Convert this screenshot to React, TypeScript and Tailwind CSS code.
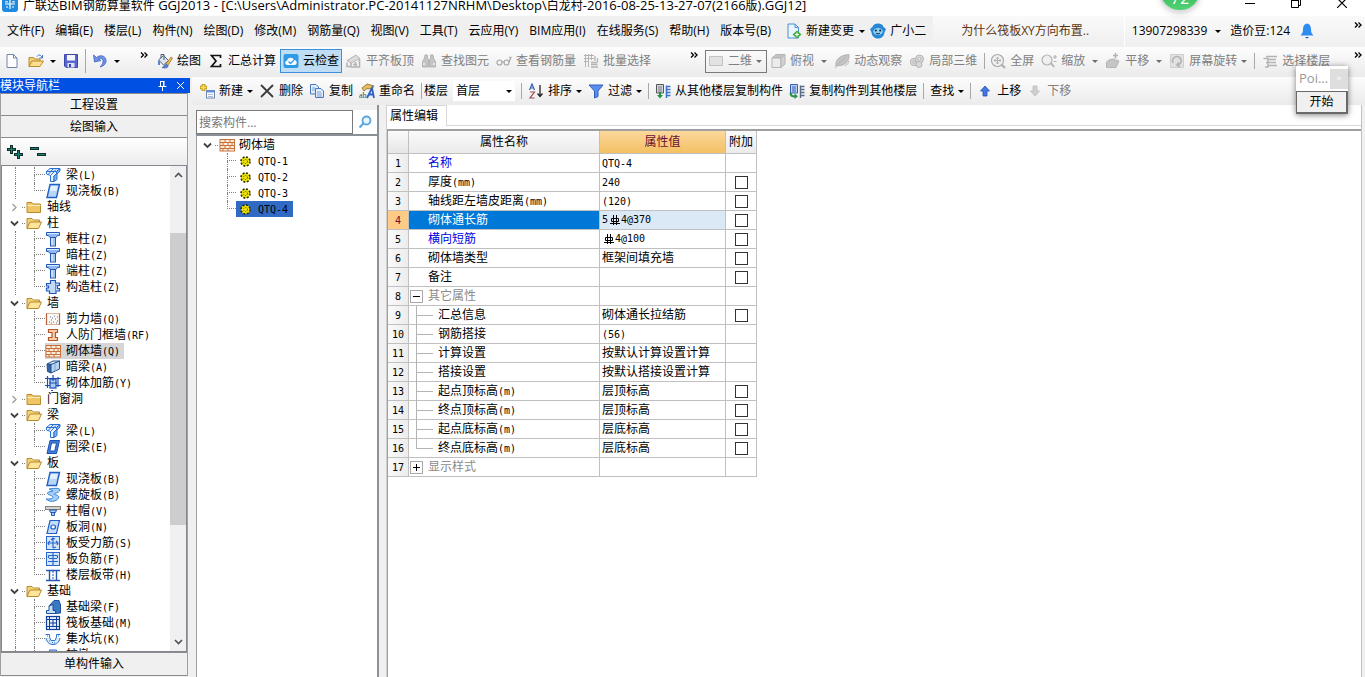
import type { ReactNode } from 'react';

const LINE = '#2a6fd0';
const FILL = '#a9cdf5';

function Svg({ children, size = 16, className = '' }: { children: ReactNode; size?: number; className?: string }) {
  return (
    <svg width={size} height={size} viewBox="0 0 16 16" className={`shrink-0 ${className}`} aria-hidden="true">
      {children}
    </svg>
  );
}

/* ---------- component type icons ---------- */

const slabPath = 'M5 1.5H14.5L11.5 14.5H2Z';

const kinds: Record<string, ReactNode> = {
  beam: (
    <g fill={FILL} stroke={LINE} strokeWidth="1">
      <path d="M1.5 4.5 5 1.5H15L11.5 4.5Z" fill="#d8eafc" />
      <path d="M1.5 4.5H11.5V7L9 9V14.5H5.5V8.5L1.5 7Z" fill="#eaf4fe" />
      <path d="M11.5 4.5 15 1.5V4L12 7V12.5L9 14.5V9L11.5 7Z" fill="#7fb3ee" />
      <path d="M3.5 7 8 2M6 8 11 2.500" />
    </g>
  ),
  slab: (
    <g>
      <path d={slabPath} fill="#b9d6f8" stroke="#1f5fc8" strokeWidth="1.400" />
      <path d="M6 3H12.500L11.500 8H4.800Z" fill="#e3effd" />
    </g>
  ),
  column: (
    <g stroke="#2456b8" strokeWidth="1">
      <path d="M1.500 1.500H14.500V4.500H12.500L11 6.500H5L3.500 4.500H1.500Z" fill="#8db8f0" />
      <rect x="5.500" y="6.500" width="5" height="8.500" fill="#c9e0fb" />
      <path d="M9 7V14.500" stroke="#7ba8e8" />
      <path d="M2 2.500H14" stroke="#d9e9fc" />
    </g>
  ),
  tie: (
    <g>
      <path
        d="M5.500 1.500H10.500V4H14.500V6.500H12.500V9.500H14.500V12H11V14.500H4.500V12H1.500V9H3.500V7H1.500V4.500H5.500Z"
        fill="#c3dbf8"
        stroke="#2456b8"
        strokeWidth="1.200"
      />
      <path d="M10.500 4V12M12.500 6.500H10.500" stroke="#5f8fda" />
    </g>
  ),
  shear: (
    <g>
      <rect x="1.500" y="2.500" width="13" height="11" fill="#fbfaf5" stroke="#e0b497" />
      <path d="M1.500 14V2.500M14.500 2.500V14" stroke="#b9603a" strokeWidth="1.200" />
      <path d="M4 11h1M6 9h1M8 11h1M10 8h1M12 10h1M5 6h1M9 5h1M12 6h1M6 12h1M11 12h1M7 7h1" stroke="#5a6d86" />
    </g>
  ),
  frame: <path d="M3.500 2.500H12.500V5.500H10.500V10.500H12.500V13.500H3.500V10.500H7V5.500H3.500Z" fill="#f8cfa8" stroke="#b4552a" strokeWidth="1.200" />,
  brick: (
    <g stroke="#c8703c" fill="#fdeedb">
      <rect x="1" y="2.500" width="14.500" height="11.500" />
      <path d="M1 5.500H15M1 8.500H15M1 11.500H15M6 2.500V5.500M11 2.500V5.500M4 5.500V8.500M9 5.500V8.500M13 5.500V8.500M6 8.500V11.500M11 8.500V11.500M4 11.500V14M9 11.500V14" />
    </g>
  ),
  hidden: (
    <g stroke="#24518f">
      <path d="M2 5 8 2H14.500L8 5.500Z" fill="#e4effb" />
      <path d="M2 5 6 5.500V14L2.500 12.500Z" fill="#37659f" />
      <path d="M6 5.500 14.500 2V10L6 14Z" fill="#b8d3f2" />
      <path d="M10 4V12" stroke="#7fa6d6" />
    </g>
  ),
  rebar: (
    <g fill="none" stroke="#1c4fae" strokeWidth="1.200">
      <path d="M0 3.500H16M0 10.500H16M2.500 1V13M13 2V12" />
      <rect x="5" y="4" width="6" height="9" fill={FILL} />
      <path d="M8 0V6M4 8H12M6 15.500H8" />
    </g>
  ),
  ring: (
    <g stroke="#1c4fae">
      <path d={slabPath} fill="#3f80dd" />
      <path d="M6.500 4H11.500L9.800 12H4.800Z" fill="#fff" />
    </g>
  ),
  spiral: (
    <path
      d="M4 2C10 1 15 1 15 3C14 6 9 6 9 7C10 8 15 8 13.500 11C11 15 5 15.500 1 12C5 12 8 12 8 10C7 8 2 8 2.500 6C3 4 7 5 8 4Z"
      fill={FILL}
      stroke="#2e86d8"
    />
  ),
  cap: (
    <g>
      <rect x="0.500" y="3.500" width="15" height="3" fill="#d5d2cb" stroke="#85817a" />
      <path d="M4.500 7H11.500L10.500 9.500H5.500ZM6.500 9.500H9.500V12.500H6.500Z" fill={FILL} stroke="#2456b8" />
    </g>
  ),
  hole: (
    <g stroke="#1f5fc8" strokeWidth="1.200">
      <path d={slabPath} fill="#c4dcf9" />
      <ellipse cx="8.200" cy="8" rx="2.300" ry="2" fill="#fff" />
    </g>
  ),
  force: (
    <g fill="none" stroke="#2a67cc">
      <rect x="1.500" y="1.500" width="13" height="13" fill="#d3e6fb" />
      <path d="M3 8H13M8 3V13M5 6 3 8 4 10M11 6 13 8 12 10M6 5 8 3 10 4M8 13 11 12" strokeWidth="1.200" />
    </g>
  ),
  neg: (
    <g fill="none" stroke="#2a67cc">
      <rect x="1.500" y="1.500" width="13" height="13" fill="#d3e6fb" />
      <path d="M3.500 4.500H12.500M3 10.500H13M8 2V14M3.500 4.500V7M12.500 4.500V7M4 7.500H12" strokeWidth="1.200" />
    </g>
  ),
  band: (
    <g stroke="#2457b6">
      <path d="M1 3.500H15M1 13.500H15" strokeWidth="1.500" />
      <path d="M4.500 3V13M11.500 3V13" strokeWidth="1.400" />
      <path d="M8 4V13" strokeDasharray="2 1" />
    </g>
  ),
  fbeam: (
    <g stroke="#1c4f9e">
      <path d="M4 7 9 1.500H14L15.500 6V14L10 14.500Z" fill="#3b78c4" />
      <path d="M1.500 14.500V11.500H4V7L8 5.500V11.500H10.500V14.500Z" fill="#c9e0fa" />
    </g>
  ),
  raft: (
    <g fill="none" stroke="#123f9a">
      <rect x="1.500" y="1.500" width="13" height="13" fill="#e3effc" strokeWidth="1.200" />
      <path d="M4.500 1V15M11.500 1V15M1 4.500H15M1 11.500H15M8 4V12M4 8H12" />
    </g>
  ),
  pit: (
    <g fill="none" stroke="#2a72cf">
      <path d="M1 7C2 12 5 13.500 8 13.500C11 13.500 14 12 15 7" fill="#d7e8fb" />
      <path d="M0.500 3.500H4.500V6L6 9.500H10L11.500 6V3.500H15.500" fill="#fff" />
      <path d="M2 5h1M13 5h1M7 11.500h1M9 12h1M4 10h1" />
    </g>
  ),
  pile: <path d="M4.500 3H11.500V8L8 14L4.500 8Z" fill={FILL} stroke={LINE} />,
};

function Folder({ open }: { open: boolean }) {
  return (
    <Svg>
      {open ? (
        <g stroke="#b98a2c">
          <path d="M1 13.500V3.500H6L7.500 5H13.500V7" fill="#f3d27c" />
          <path d="M1 13.500 4 7H15.500L12.500 13.500Z" fill="#fce49b" />
        </g>
      ) : (
        <g stroke="#b98a2c">
          <path d="M1 13.500V3.500H6L7.500 5H14.500V13.500Z" fill="#f0c665" />
          <path d="M1.500 6.500H14.500" stroke="#fdeebb" />
        </g>
      )}
    </Svg>
  );
}

function Chevron({ open }: { open: boolean }) {
  return (
    <svg width="11" height="11" viewBox="0 0 11 11" className="shrink-0" fill="none" aria-hidden="true">
      {open ? (
        <path d="M2 3.500 5.500 7 9 3.500" stroke="#404040" strokeWidth="1.800" />
      ) : (
        <path d="M3.500 2 7 5.500 3.500 9" stroke="#a0a0a0" strokeWidth="1.400" />
      )}
    </svg>
  );
}

/* ---------- toolbar icons ---------- */

const grey = '#b4b4b4';
const tools: Record<string, ReactNode> = {
  doc: <path d="M3 1.500H9.500L13 5V14.500H3ZM9.500 1.500V5H13" fill="#fff" stroke="#7383a8" />,
  open: (
    <g>
      <path d="M1 13.500V4.500H5.500L7 6H12V8" fill="#f2cf74" stroke="#b98a2c" />
      <path d="M1 13.500 4 8H15.500L12 13.500Z" fill="#fbdf8e" stroke="#b98a2c" />
      <path d="M9 3.500C11 1 13 2 14 4.500M14.500 2V5H11.500" fill="none" stroke="#3c6eb8" />
    </g>
  ),
  save: (
    <g>
      <path d="M1.500 1.500H14.500V14.500H3L1.500 13Z" fill="#5a66d0" stroke="#3c46a4" />
      <rect x="4" y="2" width="8" height="5.500" fill="#f3f5ff" />
      <rect x="4.500" y="10" width="7" height="4.500" fill="#dfe2f2" />
      <rect x="6" y="11" width="2" height="3" fill="#3c46a4" />
    </g>
  ),
  undo: <path d="M1.500 2 2.500 9 9 7.500 6.500 6C9 4.500 11.500 6 11 9C10.800 11 9.500 12.500 8 14C12 13 14.500 10.500 14 7C13.300 2.500 8 1.500 4.500 4.500Z" fill="#6d93e8" stroke="#3f62bd" strokeWidth=".8" />,
  bucket: (
    <g>
      <path d="M1.500 7 6.500 2.500 11.500 7.500 6.500 12Z" fill="#dbe4ef" stroke="#4d6076" />
      <path d="M4 5V1.500H7V7" fill="none" stroke="#4d6076" />
      <path d="M15.500 5 14 4 9 11 11 12.500Z" fill="#f2bf55" stroke="#8f6a24" strokeWidth=".7" />
      <path d="M9 11.500C7 12 7 14 5 14.500C8 15.500 11.500 15 11 12.500Z" fill="#5a7fd6" stroke="#3558ac" strokeWidth=".7" />
      <path d="M2 8V12" stroke="#4a79d0" strokeWidth="1.800" />
    </g>
  ),
  sigma: <path d="M12.500 5V2.500H3.500L8 8 3.500 13.500H12.500V11" fill="none" stroke="#111" strokeWidth="1.700" />,
  cloud: (
    <g>
      <rect x=".5" y="1" width="15" height="14" rx="2" fill="#2f9be4" />
      <path d="M4.500 12C1.500 12 1.500 8 4 7.800C4.500 4 10 3.500 11 7C14.500 7 14.500 12 11.500 12Z" fill="#fff" />
      <path d="M5.500 8.500 7.500 10.500 11 7" fill="none" stroke="#2f9be4" strokeWidth="1.300" />
    </g>
  ),
  house: (
    <g fill="#dcdcdc" stroke={grey}>
      <path d="M1 7.500 10 2 14 5.500 5 10Z" />
      <path d="M5 10V14H13.500V6M1 9.500V13.500H4M7 11.500H11M9.500 9V14" fill="none" strokeWidth="1.600" />
    </g>
  ),
  binoc: (
    <g fill="#c4c4c4" stroke={grey}>
      <path d="M4 2H6.500V5L7.500 7V14H1.500V9L3.500 5ZM9.500 2H12L12.500 5 14.500 9V14H8.500V7L9.500 5Z" />
      <path d="M3 10V12M13 10V12" stroke="#f4f4f4" strokeWidth="1.500" />
    </g>
  ),
  glasses: (
    <g fill="none" stroke="#a6a6a6" strokeWidth="1.200">
      <circle cx="3.500" cy="9.500" r="2.500" />
      <circle cx="10.500" cy="9.500" r="2.500" />
      <path d="M6 9H8M13 9 15 4.500 13 4" />
    </g>
  ),
  batch: (
    <g fill="none" stroke={grey}>
      <path d="M1 2.500H11M1 5.500H11M1 8.500H6M2.500 1V14M5.500 1V14M8.500 1V7" />
      <path d="M8 9.500H14.500M8 11.500H14.500M8 14H15M12 3V8M14.500 5V9" strokeWidth="1.300" />
    </g>
  ),
  plane: <path d="M1.500 3.500H14.500V12.500H1.500Z" fill="#e2e2e2" stroke="#c2c2c2" />,
  cube: (
    <g stroke={grey}>
      <path d="M2 5 6 1.500H15L11 5Z" fill="#c4c4c4" />
      <path d="M2 5H11V14.500H2Z" fill="#ececec" />
      <path d="M11 5 15 1.500V11L11 14.500Z" fill="#d2d2d2" />
    </g>
  ),
  leaf: (
    <g stroke={grey}>
      <path d="M2 13C1 8 5 2 15 1.500C15.500 6 13 12 6 12.500Z" fill="#c4c4c4" />
      <path d="M1 15 4 11 12 4M11 13C13 12 14.500 10 15 8" fill="none" />
    </g>
  ),
  orbit: (
    <g fill="#d9d9d9" stroke={grey}>
      <circle cx="5" cy="9" r="3.700" />
      <circle cx="10.500" cy="6" r="4" />
      <circle cx="10" cy="11.500" r="3" />
      <circle cx="10.500" cy="6" r="1.500" fill="#f4f4f4" />
      <circle cx="5" cy="9" r="1.300" fill="#f4f4f4" />
    </g>
  ),
  full: (
    <g fill="#f1f1f1" stroke="#ababab" strokeWidth="1.200">
      <path d="M11.500 11.500 15 15" strokeWidth="2" />
      <circle cx="7.500" cy="7.500" r="6" />
      <path d="M4 7.500H11M7.500 4V11M5 6V9M10 6V9M6 5H9M6 10H9" strokeWidth=".9" />
    </g>
  ),
  zoom: (
    <g fill="#efefef" stroke={grey} strokeWidth="1.200">
      <path d="M10 10 13 14" strokeWidth="2" />
      <circle cx="6" cy="7" r="5" />
      <path d="M14 2V6M12 4H16M12.500 8.500H15.500" fill="none" />
    </g>
  ),
  pan: (
    <g fill="#c6c6c6" stroke={grey}>
      <path d="M1.500 9V14.500H11L14 8 12 7 10 8V6.500L7.500 6 4 7Z" />
      <path d="M10.500 0V5.500M8 2.500H13" strokeWidth="1.600" />
    </g>
  ),
  rotate: (
    <g fill="none" stroke={grey}>
      <path d="M1.500 1.500H14.500V14.500H1.500Z" fill="#e2e2e2" stroke="#cfcfcf" />
      <path d="M4 10C2 5 7 2.500 10 4C14 7 12 11.500 8 12L9.500 9.500M8 12 11 14" strokeWidth="1.600" />
    </g>
  ),
  floors: (
    <path d="M4 3.500H15M6 6.500H14M4 9.500H14M6 12.500H15M1.500 5.500H6V14H3" fill="none" stroke={grey} strokeWidth="1.500" />
  ),
  add: (
    <g>
      <path d="M4.500 1V8M1 4.500H8" stroke="#a88512" strokeWidth="3.600" />
      <path d="M4.500 1.500V7.500M1.500 4.500H7.500" stroke="#fbdc55" strokeWidth="2" />
      <rect x="7.500" y="7.500" width="8" height="7.500" fill="#fff" stroke="#6f86ad" />
      <path d="M7.500 8.500H15.500" stroke="#5f8fd8" strokeWidth="2" />
      <path d="M9 11.500H14M9 13.500H14" stroke="#a9bcd8" />
    </g>
  ),
  del: <path d="M2 2 14 14M14 2 2 14" stroke="#3c3c3c" strokeWidth="1.800" />,
  copy: (
    <g fill="#e3edfb" stroke="#4878bf">
      <path d="M1.500 1.500H7L9.500 4V11H1.500Z" />
      <path d="M6.500 5.500H12L14.500 8V14.500H6.500Z" />
      <path d="M3 5H6M3 7H6M8 9H12M8 11H13M8 13H13" stroke="#7ea0d4" />
    </g>
  ),
  rename: (
    <g>
      <path d="M3 5 8 1 15 3 13 6 8 5.500 5 8Z" fill="#e2bd62" stroke="#8a6b22" strokeWidth=".8" />
      <text x="0" y="14.500" fontSize="8" fontFamily="Liberation Serif" fill="#444">ab</text>
      <path d="M8 15 13 5 15 15M10 11.500H14.500" fill="none" stroke="#2d62c4" strokeWidth="1.800" />
    </g>
  ),
  sort: (
    <g>
      <path d="M1.500 7 4 1 6.500 7M2.500 5H5.500" fill="none" stroke="#3461b4" strokeWidth="1.200" />
      <path d="M2 9H6.500L2 15H6.500" fill="none" stroke="#a04a55" strokeWidth="1.200" />
      <path d="M12 2V13M9.500 10.500 12 13.500 14.500 10.500" fill="none" stroke="#222" strokeWidth="1.300" />
    </g>
  ),
  funnel: <path d="M1 2H15L10 8V13.500L6.500 15V8Z" fill="#5b8def" stroke="#2f5fbe" />,
  fromFloor: (
    <g>
      <path d="M1.500 1.500H8.500V10H1.500Z" fill="#d5d9e0" stroke="#555" />
      <path d="M3 4H7M3 6H7M3 8H7" stroke="#777" />
      <path d="M5 9V13" stroke="#269246" strokeWidth="2" />
      <path d="M2 12H8L5 15.500Z" fill="#269246" />
      <path d="M11.500 2.500V15M11.500 3.500H15.500M11.500 6.500H15.500M11.500 9.500H15.500M11.500 12.500H15.500" stroke="#3f74cc" strokeWidth="1.600" />
    </g>
  ),
  toFloor: (
    <g>
      <path d="M1.500 1.500H8.500V10H1.500Z" fill="#bcd3f4" stroke="#3461b4" />
      <path d="M3 4H7M3 6H7M3 8H7" stroke="#3461b4" />
      <path d="M1.500 10C1.500 13.500 4 13.500 6 13.500" fill="none" stroke="#269246" strokeWidth="2" />
      <path d="M5.500 10.500 9 13.200 5.500 16Z" fill="#269246" />
      <path d="M11.500 2.500V15M11.500 3.500H15.500M11.500 6.500H15.500M11.500 9.500H15.500M11.500 12.500H15.500" stroke="#5a6b88" strokeWidth="1.400" />
    </g>
  ),
  up: <path d="M8 3 12.500 8H10V13H6V8H3.500Z" fill="#3f78e6" stroke="#2350a8" strokeWidth=".8" />,
  down: <path d="M8 13 12.500 8H10V3H6V8H3.500Z" fill="#cfcfcf" stroke="#bdbdbd" strokeWidth=".8" />,
  change: (
    <g>
      <path d="M2 1H9L12.500 4.500V15H2Z" fill="#eaf4fd" stroke="#4c8fd0" />
      <path d="M9 1V4.500H12.500" fill="none" stroke="#4c8fd0" />
      <path d="M11 7.500 15.500 11.500 11 15.500 6.500 11.500Z" fill="#3fae3a" />
      <path d="M11 9.500V13.500M9 11.500H13" stroke="#fff" strokeWidth="1.100" />
    </g>
  ),
  robot: (
    <g>
      <path d="M8 .5C11 .5 13 2 13.500 4L16 6L14.500 9.500C14 13.500 11 15.500 8 15.500C5 15.500 2 13.500 1.500 9.500L0 6L2.500 4C3 2 5 .5 8 .5Z" fill="#2587d6" />
      <ellipse cx="8" cy="8.500" rx="4.800" ry="3.500" fill="#8fd2f6" />
      <circle cx="5.800" cy="7.500" r="1" fill="#123" />
      <circle cx="10.200" cy="7.500" r="1" fill="#123" />
      <path d="M6 10C7 11.200 9 11.200 10 10" stroke="#123" fill="none" />
    </g>
  ),
};

function Caret({ muted }: { muted?: boolean }) {
  return (
    <svg width="6" height="3" viewBox="0 0 6 3" className="shrink-0" aria-hidden="true">
      <path d="M0 0H6L3 3Z" fill={muted ? '#6e6e6e' : '#000'} />
    </svg>
  );
}

function More() {
  return (
    <button type="button" aria-label="更多" className="flex w-2">
      <svg width="8" height="6" viewBox="0 0 8 6" fill="none" stroke="#000" strokeWidth="1.300" aria-hidden="true">
        <path d="M1 .5 3.500 3 1 5.500M4.500 .5 7 3 4.500 5.500" />
      </svg>
    </button>
  );
}

function Sep() {
  return <span className="h-4 w-px shrink-0 bg-[#a8a8a8]" />;
}

function Tool({
  icon,
  label,
  caret,
  disabled,
}: {
  icon?: string;
  label: string;
  caret?: 'near' | 'wide';
  disabled?: boolean;
}) {
  return (
    <button
      type="button"
      disabled={disabled}
      className="flex shrink-0 items-center gap-1 whitespace-nowrap disabled:text-[#808080]"
    >
      {icon && <Svg>{tools[icon]}</Svg>}
      <span className={caret === 'wide' ? 'pr-[3px]' : ''}>{label}</span>
      {caret && <Caret muted={disabled} />}
    </button>
  );
}

/* Pairs 12px ideographs with half-width Latin, as in a bitmap Song face. */
function Song({ text }: { text: string }) {
  return (
    <>
      {text.split(/([\x21-\x7e]+)/).map((part, i) =>
        i % 2 ? (
          <span key={i} className="font-['DejaVu_Sans_Mono',monospace] text-[10px]">
            {part}
          </span>
        ) : (
          part
        ),
      )}
    </>
  );
}

/* ---------- data ---------- */

const menus = [
  '文件(F)', '编辑(E)', '楼层(L)', '构件(N)', '绘图(D)', '修改(M)', '钢筋量(Q)', '视图(V)', '工具(T)',
  '云应用(Y)', 'BIM应用(I)', '在线服务(S)', '帮助(H)', '版本号(B)',
];

type Group = { name?: string; open: boolean; items: [string, string][] };

const groups: Group[] = [
  { open: true, items: [['beam', '梁(L)'], ['slab', '现浇板(B)']] },
  { name: '轴线', open: false, items: [] },
  { name: '柱', open: true, items: [['column', '框柱(Z)'], ['column', '暗柱(Z)'], ['column', '端柱(Z)'], ['tie', '构造柱(Z)']] },
  {
    name: '墙',
    open: true,
    items: [['shear', '剪力墙(Q)'], ['frame', '人防门框墙(RF)'], ['brick', '砌体墙(Q)'], ['hidden', '暗梁(A)'], ['rebar', '砌体加筋(Y)']],
  },
  { name: '门窗洞', open: false, items: [] },
  { name: '梁', open: true, items: [['beam', '梁(L)'], ['ring', '圈梁(E)']] },
  {
    name: '板',
    open: true,
    items: [
      ['slab', '现浇板(B)'], ['spiral', '螺旋板(B)'], ['cap', '柱帽(V)'], ['hole', '板洞(N)'],
      ['force', '板受力筋(S)'], ['neg', '板负筋(F)'], ['band', '楼层板带(H)'],
    ],
  },
  { name: '基础', open: true, items: [['fbeam', '基础梁(F)'], ['raft', '筏板基础(M)'], ['pit', '集水坑(K)'], ['pile', '柱墩(D)']] },
];

type Row = { name: string; value?: ReactNode; check?: boolean; kind?: 'link' | 'open' | 'closed' | 'child' | 'last' };

function RebarMark() {
  return (
    <svg width="10" height="10" viewBox="0 0 10 10" className="mx-px shrink-0" fill="none" stroke="#000" aria-label="三级钢">
      <path d="M3.500 0V10M6.500 0V10M0 8.500H10M1.500 3.500H8.500V6.500H1.500Z" />
    </svg>
  );
}

const rows: Row[] = [
  { name: '名称', value: 'QTQ-4', kind: 'link' },
  { name: '厚度(mm)', value: '240', check: true },
  { name: '轴线距左墙皮距离(mm)', value: '(120)', check: true },
  { name: '砌体通长筋', value: <><Song text="5" /><span className="w-px" /><RebarMark /><Song text="4@370" /></>, check: true },
  { name: '横向短筋', value: <><span className="w-px" /><RebarMark /><Song text="4@100" /></>, check: true, kind: 'link' },
  { name: '砌体墙类型', value: '框架间填充墙', check: true },
  { name: '备注', check: true },
  { name: '其它属性', kind: 'open' },
  { name: '汇总信息', value: '砌体通长拉结筋', check: true, kind: 'child' },
  { name: '钢筋搭接', value: '(56)', kind: 'child' },
  { name: '计算设置', value: '按默认计算设置计算', kind: 'child' },
  { name: '搭接设置', value: '按默认搭接设置计算', kind: 'child' },
  { name: '起点顶标高(m)', value: '层顶标高', check: true, kind: 'child' },
  { name: '终点顶标高(m)', value: '层顶标高', check: true, kind: 'child' },
  { name: '起点底标高(m)', value: '层底标高', check: true, kind: 'child' },
  { name: '终点底标高(m)', value: '层底标高', check: true, kind: 'last' },
  { name: '显示样式', kind: 'closed' },
];

/* ---------- panels ---------- */

function TitleBar() {
  return (
    <header className="flex h-4 shrink-0 items-start bg-white pl-[2px]">
      <Svg className="-mt-1">
        <rect width="16" height="16" rx="3" fill="#1f8be0" />
        <path d="M8 3V13M3 8H13M4 5V6H6M12 5V6H10M4 11H6M12 11H10" stroke="#fff" strokeWidth="1.200" fill="none" />
      </Svg>
      <h1 className="ml-[5px] flex-1 whitespace-pre text-[13px] leading-[10px]">
        <span className="text-xs leading-[10px]">广联达</span>BIM<span className="text-xs leading-[10px]">钢筋算量软件</span>
        {' GGJ2013 - [C:\\Users\\Administrator.PC-20141127NRHM\\Desktop\\'}
        <span className="text-xs leading-[10px]">白龙村</span>-2016-08-25-13-27-07(2166
        <span className="text-xs leading-[10px]">版</span>).GGJ12]
      </h1>
      <div className="flex gap-9 pr-[18px]">
        <button type="button" aria-label="最小化">
          <svg width="10" height="8" viewBox="0 0 10 8"><path d="M0 3.500H10" stroke="#000" /></svg>
        </button>
        <button type="button" aria-label="还原">
          <svg width="10" height="8" viewBox="0 0 10 8" fill="none" stroke="#000"><path d="M.5 0V7.500H7.500V0M7.500 5.500H9.500V0M.5 .5H7.500" /></svg>
        </button>
        <button type="button" aria-label="关闭">
          <svg width="10" height="8" viewBox="0 0 10 8" fill="none" stroke="#000" strokeWidth="1.200"><path d="M0 -2 10 8M10 -2 0 8" /></svg>
        </button>
      </div>
    </header>
  );
}

function MenuBar() {
  return (
    <nav className="flex h-[31px] shrink-0 items-center bg-[#f0f0f0] pb-px">
      <div className="flex gap-[11px] pl-[7px]">
        {menus.map((m) => (
          <button key={m} type="button" className="whitespace-nowrap">{m}</button>
        ))}
      </div>
      <div className="ml-[15px] flex items-center gap-[5px]">
        <button type="button" className="flex items-center gap-1 whitespace-nowrap">
          <Svg>{tools.change}</Svg><span className="pr-px">新建变更</span><Caret />
        </button>
        <button type="button" className="flex items-center gap-1 whitespace-nowrap">
          <Svg>{tools.robot}</Svg>广小二
        </button>
      </div>
      <div className="ml-[7px] flex h-full flex-1 items-center bg-linear-to-b from-[#fafafa] to-[#efefef]">
        <a href="#tips" className="ml-[28px] whitespace-nowrap text-[#5c3410]">为什么筏板XY方向布置..</a>
        <span className="ml-auto flex h-full items-center gap-[9px] border-l border-white pl-[7px]">
          <button type="button" className="flex items-center gap-2">13907298339 <Caret /></button>
          <span className="whitespace-nowrap">造价豆:124</span>
          <button type="button" aria-label="通知">
            <Svg>
              <path d="M8 .5C5 1 4 3.500 4 6.500C4 9.500 3 11 1.500 12.500H14.500C13 11 12 9.500 12 6.500C12 3.500 11 1 8 .5Z" fill="#2c8cf0" />
              <path d="M6 14H10L8 15.500Z" fill="#14508f" />
            </Svg>
          </button>
        </span>
        <span className="ml-[39px] mr-[3px] mb-3"><More /></span>
      </div>
    </nav>
  );
}

function MainToolbar() {
  return (
    <div className="flex h-[30px] shrink-0 items-center bg-linear-to-b from-[#fdfdfd] to-[#ebebeb] pb-[2px]">
      <div className="flex items-center pl-1">
        <button type="button" aria-label="新建"><Svg>{tools.doc}</Svg></button>
        <button type="button" aria-label="打开" className="ml-2 flex items-center gap-[6px]"><Svg>{tools.open}</Svg><Caret /></button>
        <button type="button" aria-label="保存" className="ml-[7px]"><Svg>{tools.save}</Svg></button>
        <span className="mx-[6px] h-6 w-px bg-[#a8a8a8]" />
        <button type="button" aria-label="撤销" className="flex items-center gap-[6px]"><Svg>{tools.undo}</Svg><Caret /></button>
        <span className="ml-5 mb-3"><More /></span>
      </div>
      <div className="ml-[9px] flex items-center gap-[7px]">
        <Tool icon="bucket" label="绘图" />
        <Tool icon="sigma" label="汇总计算" />
        <button type="button" aria-pressed="true" className="-mx-[3px] flex h-6 items-center gap-1 whitespace-nowrap border border-[#3c8fd9] bg-[#bfddf5] px-[2px]">
          <Svg>{tools.cloud}</Svg>云检查
        </button>
        <Tool icon="house" label="平齐板顶" disabled />
        <Tool icon="binoc" label="查找图元" disabled />
        <Tool icon="glasses" label="查看钢筋量" disabled />
        <Tool icon="batch" label="批量选择" disabled />
      </div>
      <span className="ml-[39px] mb-3"><More /></span>
      <div className="ml-[7px] flex items-center gap-[7px]">
        <button type="button" disabled className="-mr-1 flex h-[23px] w-[62px] items-center gap-1 border border-[#7a7a7a] px-[2px] text-[#808080]">
          <Svg>{tools.plane}</Svg>二维<span className="ml-auto mr-[2px]"><Caret muted /></span>
        </button>
        <Tool icon="cube" label="俯视" caret="wide" disabled />
        <Tool icon="leaf" label="动态观察" disabled />
        <Tool icon="orbit" label="局部三维" disabled />
        <span className="w-0" aria-hidden="true" />
        <span className="-ml-[7px] flex items-center gap-[5px]">
          <Sep />
          <Tool icon="full" label="全屏" disabled />
        </span>
        <Tool icon="zoom" label="缩放" caret="wide" disabled />
        <Tool icon="pan" label="平移" caret="wide" disabled />
        <Tool icon="rotate" label="屏幕旋转" caret="near" disabled />
        <Sep />
        <Tool icon="floors" label="选择楼层" disabled />
      </div>
      <span className="ml-auto mr-[3px] mb-3"><More /></span>
    </div>
  );
}

function ModulePanel() {
  return (
    <aside className="flex w-[190px] shrink-0 flex-col py-px">
      <div className="flex h-[15px] shrink-0 items-center bg-[#0050e4] text-white">
        <h2 className="flex-1 leading-[15px]">模块导航栏</h2>
        <button type="button" aria-label="固定">
          <svg width="9" height="10" viewBox="0 0 9 10" fill="none" stroke="#fff"><path d="M2.500 0V5.500M6 .5V5.500M2 .5H6.500M5.500 1V5M.5 5.500H8.500M4.500 6V10" /></svg>
        </button>
        <button type="button" aria-label="关闭面板" className="ml-[9px] mr-[5px]">
          <svg width="9" height="9" viewBox="0 0 9 9" stroke="#fff"><path d="M1 1 8 8M8 1 1 8" /></svg>
        </button>
      </div>
      <div className="mr-[2px] flex min-h-0 flex-1 flex-col border-x border-[#a0a0a0]">
        <button type="button" className="h-[23px] shrink-0 border-y border-[#8c8c8c] bg-[#f0f0f0]">工程设置</button>
        <button type="button" className="h-[22px] shrink-0 border-b border-[#8c8c8c] bg-[#f0f0f0]">绘图输入</button>
        <div className="flex h-[27px] shrink-0 items-center gap-[6px] bg-linear-to-b from-white to-[#ececec] pl-[5px]">
          <button type="button" aria-label="全部展开">
            <svg width="18" height="16" viewBox="0 0 18 16"><path d="M5.500 1V10M1 5.500H10M12.500 6V15M8 10.500H17" stroke="#0c2f2c" strokeWidth="3" /><path d="M5.500 2V9M2 5.500H9M12.500 7V14M9 10.500H16" stroke="#1f8074" /></svg>
          </button>
          <button type="button" aria-label="全部折叠">
            <svg width="18" height="16" viewBox="0 0 18 16"><path d="M0 4.500H9M7 10.500H16" stroke="#0c2f2c" strokeWidth="3" /><path d="M1 4.500H8M8 10.500H15" stroke="#1f8074" /></svg>
          </button>
        </div>
        <div className="flex min-h-0 flex-1 border border-[#828790] bg-white">
          <ul className="min-w-0 flex-1 overflow-hidden pt-px">
            {groups.map((g, gi) => (
              <li key={gi}>
                {g.name && (
                  <div className="flex h-4 items-center pl-[7px]">
                    <Chevron open={g.open} />
                    <span className="ml-[2px] mr-px w-[3px] border-t border-dotted border-[#808080]" />
                    <Folder open={g.open} />
                    <span className="ml-[5px] leading-4">{g.name}</span>
                  </div>
                )}
                <ul>
                  {g.items.map(([kind, label], i) => (
                    <li key={label} className="flex h-4 pl-[13px]">
                      <span className="w-[19px] border-l border-dotted border-[#808080]" />
                      <span className="flex w-[11px] flex-col">
                        <span className="h-2 border-b border-l border-dotted border-[#808080]" />
                        {i < g.items.length - 1 && <span className="h-2 border-l border-dotted border-[#808080]" />}
                      </span>
                      <a
                        href={`#${kind}`}
                        className={kind === 'brick' ? 'flex bg-[#d6d6d6] pr-1 whitespace-nowrap' : 'flex pr-1 whitespace-nowrap'}
                      >
                        <Svg>{kinds[kind]}</Svg>
                        <span className="ml-[5px] leading-4"><Song text={label} /></span>
                      </a>
                    </li>
                  ))}
                </ul>
              </li>
            ))}
          </ul>
          <div className="flex w-4 shrink-0 flex-col items-center bg-[#f0f0f0]">
            <button type="button" aria-label="向上滚动" className="flex h-[18px] items-center">
              <svg width="9" height="6" viewBox="0 0 9 6" fill="none" stroke="#505050" strokeWidth="1.600"><path d="M1 5 4.500 1.500 8 5" /></svg>
            </button>
            <div className="flex w-full flex-1 flex-col">
              <span className="flex-[49]" />
              <span className="w-full flex-[292] bg-[#cdcdcd]" />
              <span className="flex-[108]" />
            </div>
            <button type="button" aria-label="向下滚动" className="flex h-[18px] items-center">
              <svg width="9" height="6" viewBox="0 0 9 6" fill="none" stroke="#505050" strokeWidth="1.600"><path d="M1 1 4.500 4.500 8 1" /></svg>
            </button>
          </div>
        </div>
        <button type="button" className="h-6 shrink-0 border-y border-[#8c8c8c] bg-[#f0f0f0]">单构件输入</button>
      </div>
    </aside>
  );
}

function ComponentToolbar() {
  return (
    <div className="flex h-[28px] shrink-0 items-center gap-[6px] bg-linear-to-b from-[#fdfdfd] to-[#ebebeb] pl-[7px]">
      <Tool icon="add" label="新建" caret="near" />
      <Tool icon="del" label="删除" />
      <Tool icon="copy" label="复制" />
      <Tool icon="rename" label="重命名" />
      <Sep />
      <label className="-ml-1 flex items-center gap-[5px] whitespace-nowrap">
        楼层
        <span className="grid w-[62px] items-center">
          <select className="col-start-1 row-start-1 h-5 appearance-none bg-white pl-[3px] text-xs outline-none">
            <option>首层</option>
          </select>
          <span className="col-start-1 row-start-1 mr-[3px] justify-self-end"><Caret /></span>
        </span>
      </label>
      <Sep />
      <Tool icon="sort" label="排序" caret="near" />
      <Tool icon="funnel" label="过滤" caret="near" />
      <Sep />
      <Tool icon="fromFloor" label="从其他楼层复制构件" />
      <Tool icon="toFloor" label="复制构件到其他楼层" />
      <Sep />
      <Tool label="查找" caret="near" />
      <Sep />
      <Tool icon="up" label="上移" />
      <Tool icon="down" label="下移" disabled />
    </div>
  );
}

function Gear() {
  return (
    <svg width="11" height="11" viewBox="0 0 11 11" className="shrink-0" aria-hidden="true">
      <circle cx="5.500" cy="5.500" r="4.500" fill="#f2e600" stroke="#2b2b00" strokeWidth="1.600" strokeDasharray="2 1.530" />
      <circle cx="5.500" cy="5.500" r="2" fill="none" stroke="#4a4600" strokeWidth="1" strokeDasharray="1 1.100" />
    </svg>
  );
}

function ComponentList() {
  const items = ['QTQ-1', 'QTQ-2', 'QTQ-3', 'QTQ-4'];
  return (
    <section className="flex w-[183px] shrink-0 flex-col border-r-2 border-[#8a8f98] bg-white">
      <div className="flex h-[31px] shrink-0 items-end border-b-2 border-[#8a8f98] bg-[#f0f0f0]">
        <input
          aria-label="搜索构件"
          placeholder="搜索构件..."
          className="h-6 w-[157px] border border-[#7a7a7a] bg-white px-[2px] text-xs outline-none placeholder:text-[#777]"
        />
        <button type="button" aria-label="搜索" className="flex h-6 flex-1 items-center justify-center bg-white">
          <Svg><circle cx="9.500" cy="6.500" r="4" fill="#eaf5fd" stroke="#5aa5dc" strokeWidth="1.800" /><path d="M6.500 9.500 2.500 13.500" stroke="#5aa5dc" strokeWidth="2.200" /></Svg>
        </button>
      </div>
      <div className="min-h-0 flex-1 border-l border-[#a0a0a0] pt-px">
        <div className="flex h-4 items-center pl-[5px]">
          <Chevron open />
          <span className="ml-[2px] mr-px w-[3px] border-t border-dotted border-[#808080]" />
          <Svg>{kinds.brick}</Svg>
          <span className="ml-1 leading-4">砌体墙</span>
        </div>
        <ul>
          {items.map((it, i) => (
            <li key={it} className="flex h-4 pl-[30px]">
              <span className="flex w-[9px] flex-col">
                <span className="h-2 border-b border-l border-dotted border-[#808080]" />
                {i < items.length - 1 && <span className="h-2 border-l border-dotted border-[#808080]" />}
              </span>
              <a
                href={`#${it}`}
                className={i === 3 ? 'flex w-[57px] items-center gap-[7px] bg-[#316ac5] pl-1' : 'flex w-[57px] items-center gap-[7px] pl-1'}
              >
                <Gear />
                <span className="leading-4"><Song text={it} /></span>
              </a>
            </li>
          ))}
        </ul>
      </div>
    </section>
  );
}

function NameCell({ row, active }: { row: Row; active: boolean }) {
  const k = row.kind;
  if (k === 'child' || k === 'last') {
    return (
      <div className="flex h-[18px] items-center pl-[7px]">
        <span className="flex h-[19px] w-[17px] flex-col">
          <span className="h-[10px] border-b border-l border-[#b4b4b4]" />
          {k === 'child' && <span className="h-[9px] border-l border-[#b4b4b4]" />}
        </span>
        <span className="pl-[5px]"><Song text={row.name} /></span>
      </div>
    );
  }
  if (k === 'open' || k === 'closed') {
    return (
      <div className="flex h-[18px] items-center gap-[5px] pl-px text-[#8c8c8c]">
        <button type="button" aria-label={k === 'open' ? '折叠' : '展开'} className="flex h-[13px] w-[13px] items-center justify-center border border-[#a8a8a8] bg-white">
          <svg width="7" height="7" viewBox="0 0 7 7" stroke="#000"><path d={k === 'open' ? 'M0 3.500H7' : 'M0 3.500H7M3.500 0V7'} /></svg>
        </button>
        <span>{row.name}</span>
      </div>
    );
  }
  return (
    <div
      className={
        active
          ? 'flex h-[18px] items-center bg-[#0078d7] pl-[19px] text-white'
          : k === 'link'
            ? 'flex h-[18px] items-center pl-[19px] text-[#0000e0]'
            : 'flex h-[18px] items-center pl-[19px]'
      }
    >
      <span><Song text={row.name} /></span>
    </div>
  );
}

function PropertyEditor() {
  const num = 'border-r border-b border-[#c0c0c0] p-0 text-center font-normal';
  return (
    <section className="flex min-w-0 flex-1 flex-col border-l border-[#d0d0d0] bg-white">
      <div className="flex h-[21px] shrink-0">
        <button type="button" className="w-[60px] border-r border-t border-[#d9d9d9] text-left pl-[3px] whitespace-nowrap">属性编辑</button>
        <span className="flex-1 border-b border-[#d9d9d9]" />
      </div>
      <div className="mt-[3px] min-h-0 flex-1 border-t-2 border-l border-[#a0a0a0]">
        <table className="w-[369px] table-fixed border-separate border-spacing-0 leading-[18px]">
          <colgroup>
            <col className="w-[21px]" />
            <col className="w-[191px]" />
            <col className="w-[126px]" />
            <col className="w-[31px]" />
          </colgroup>
          <thead>
            <tr className="h-[23px]">
              <th className="border-r border-b border-[#c0c0c0] bg-linear-to-b from-[#fafafa] to-[#e6e6e6] p-0" />
              <th scope="col" className="border-r border-b border-[#c0c0c0] bg-linear-to-b from-[#fafafa] to-[#ebebeb] p-0 font-normal">属性名称</th>
              <th scope="col" className="border-r border-b border-[#c0c0c0] bg-linear-to-b from-[#fbd89c] to-[#f3c062] p-0 font-normal text-[#6b0f2e]">属性值</th>
              <th scope="col" className="border-r border-b border-[#c0c0c0] bg-linear-to-b from-[#fafafa] to-[#ebebeb] p-0 font-normal whitespace-nowrap">附加</th>
            </tr>
          </thead>
          <tbody>
            {rows.map((r, i) => {
              const active = i === 3;
              return (
                <tr key={i} className="h-[19px]">
                  <th scope="row" className={active ? `${num} bg-[#fdcb85] text-[#6b0f2e]` : `${num} bg-linear-to-r from-[#fafafa] to-[#ececec]`}>
                    <div className="h-[18px]"><Song text={String(i + 1)} /></div>
                  </th>
                  <td className="border-r border-b border-[#c0c0c0] p-0 whitespace-nowrap"><NameCell row={r} active={active} /></td>
                  <td className="border-r border-b border-[#c0c0c0] p-0 whitespace-nowrap">
                    <div className={active ? 'flex h-[18px] items-center bg-[#dbe9f7] pl-[2px]' : 'flex h-[18px] items-center pl-[2px]'}>
                      {typeof r.value === 'string' ? <span><Song text={r.value} /></span> : r.value}
                    </div>
                  </td>
                  <td className="border-r border-b border-[#c0c0c0] p-0">
                    <div className="flex h-[18px] items-center justify-center">
                      {r.check && <input type="checkbox" aria-label={`附加 ${r.name}`} className="h-[13px] w-[13px] appearance-none border border-[#333] bg-white checked:bg-[#0078d7]" />}
                    </div>
                  </td>
                </tr>
              );
            })}
          </tbody>
        </table>
      </div>
    </section>
  );
}

export default function App() {
  return (
    <div className="relative flex h-screen flex-col overflow-hidden bg-[#f0f0f0] font-['Open_Sans','Noto_Sans_CJK_SC',sans-serif] text-xs text-black">
      <TitleBar />
      <MenuBar />
      <MainToolbar />
      <div className="flex min-h-0 flex-1">
        <ModulePanel />
        <div className="ml-[2px] flex min-w-0 flex-1 flex-col">
          <ComponentToolbar />
          <div className="flex min-h-0 flex-1 pl-1 pr-[3px]">
            <ComponentList />
            <span className="w-[7px] shrink-0" />
            <PropertyEditor />
            <span className="w-px shrink-0 bg-[#c0c0c0]" />
          </div>
        </div>
      </div>

      <div className="absolute -top-8 left-[1158px] flex h-11 w-11 items-end justify-center rounded-full border-2 border-[#dcdcdc] bg-linear-to-b from-[#1f9e44] to-[#4fd373] pb-1 text-base leading-4 text-white shadow-md">
        72
      </div>
      <div className="absolute top-[66px] right-[17px] w-[52px] bg-white shadow-[0_1px_6px_rgba(0,0,0,0.5)]">
        <div className="flex h-[25px] items-center justify-between pl-[3px] text-[13px] text-[#999]">
          <span>Poi...</span>
          <button type="button" aria-label="关闭浮窗" className="h-5 w-[18px] bg-[#dedede] text-[8px] text-white">×</button>
        </div>
        <button type="button" className="h-[23px] w-full border-t border-r-2 border-b-2 border-l border-[#6a6a6a] bg-[#f0f0f0]">开始</button>
      </div>
    </div>
  );
}
